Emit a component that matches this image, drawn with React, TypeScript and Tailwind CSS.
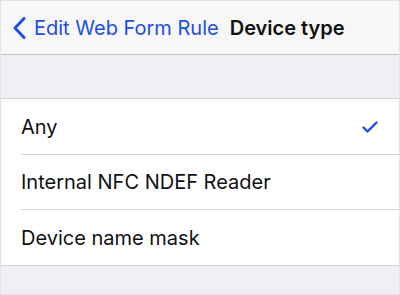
import React from "react";

const BLUE = "#1d4ee6";

function Row({ label, checked, height, last }: { label: string; checked?: boolean; height: string; last?: boolean }) {
  return (
    <div className={`bg-white pl-[20px] ${height}`}>
      <div
        className={`flex h-full items-center justify-between pr-[20px] ${last ? "" : "border-b border-[#d4d4d8]"}`}
      >
        <span className="text-[20px] text-[#111]">{label}</span>
        {checked ? (
          <svg width="16" height="12" viewBox="0 0 16 12" fill="none" className="mr-[1px]">
            <path d="M1.5 6.5 L5.5 10.5 L14.5 1.5" stroke={BLUE} strokeWidth="2.4" strokeLinecap="round" strokeLinejoin="round" />
          </svg>
        ) : null}
      </div>
    </div>
  );
}

export default function App() {
  return (
    <div
      className="flex h-[295px] w-[400px] flex-col overflow-hidden border border-[#e2e2e2] bg-[#efeff4]"
      style={{ fontFamily: "Inter, 'Liberation Sans', sans-serif" }}
    >
      <header className="flex h-[54px] items-center border-b border-[#c4c4c6] bg-[#f7f7f7] pl-[12px]">
        <svg width="13" height="22" viewBox="0 0 13 22" fill="none">
          <path d="M11 1.5 L2 11 L11 20.5" stroke={BLUE} strokeWidth="3" strokeLinecap="round" strokeLinejoin="round" />
        </svg>
        <span className="ml-[8px] text-[20px]" style={{ color: BLUE }}>
          Edit Web Form Rule
        </span>
        <span className="ml-[11px] text-[20px] font-semibold text-[#111]">Device type</span>
      </header>
      <div className="h-[44px] border-b border-[#d4d4d8]" />
      <div className="border-b border-[#d4d4d8]">
        <Row label="Any" checked height="h-[56px]" />
        <Row label="Internal NFC NDEF Reader" height="h-[55px]" />
        <Row label="Device name mask" height="h-[55px]" last />
      </div>
      <div className="flex-1" />
    </div>
  );
}
